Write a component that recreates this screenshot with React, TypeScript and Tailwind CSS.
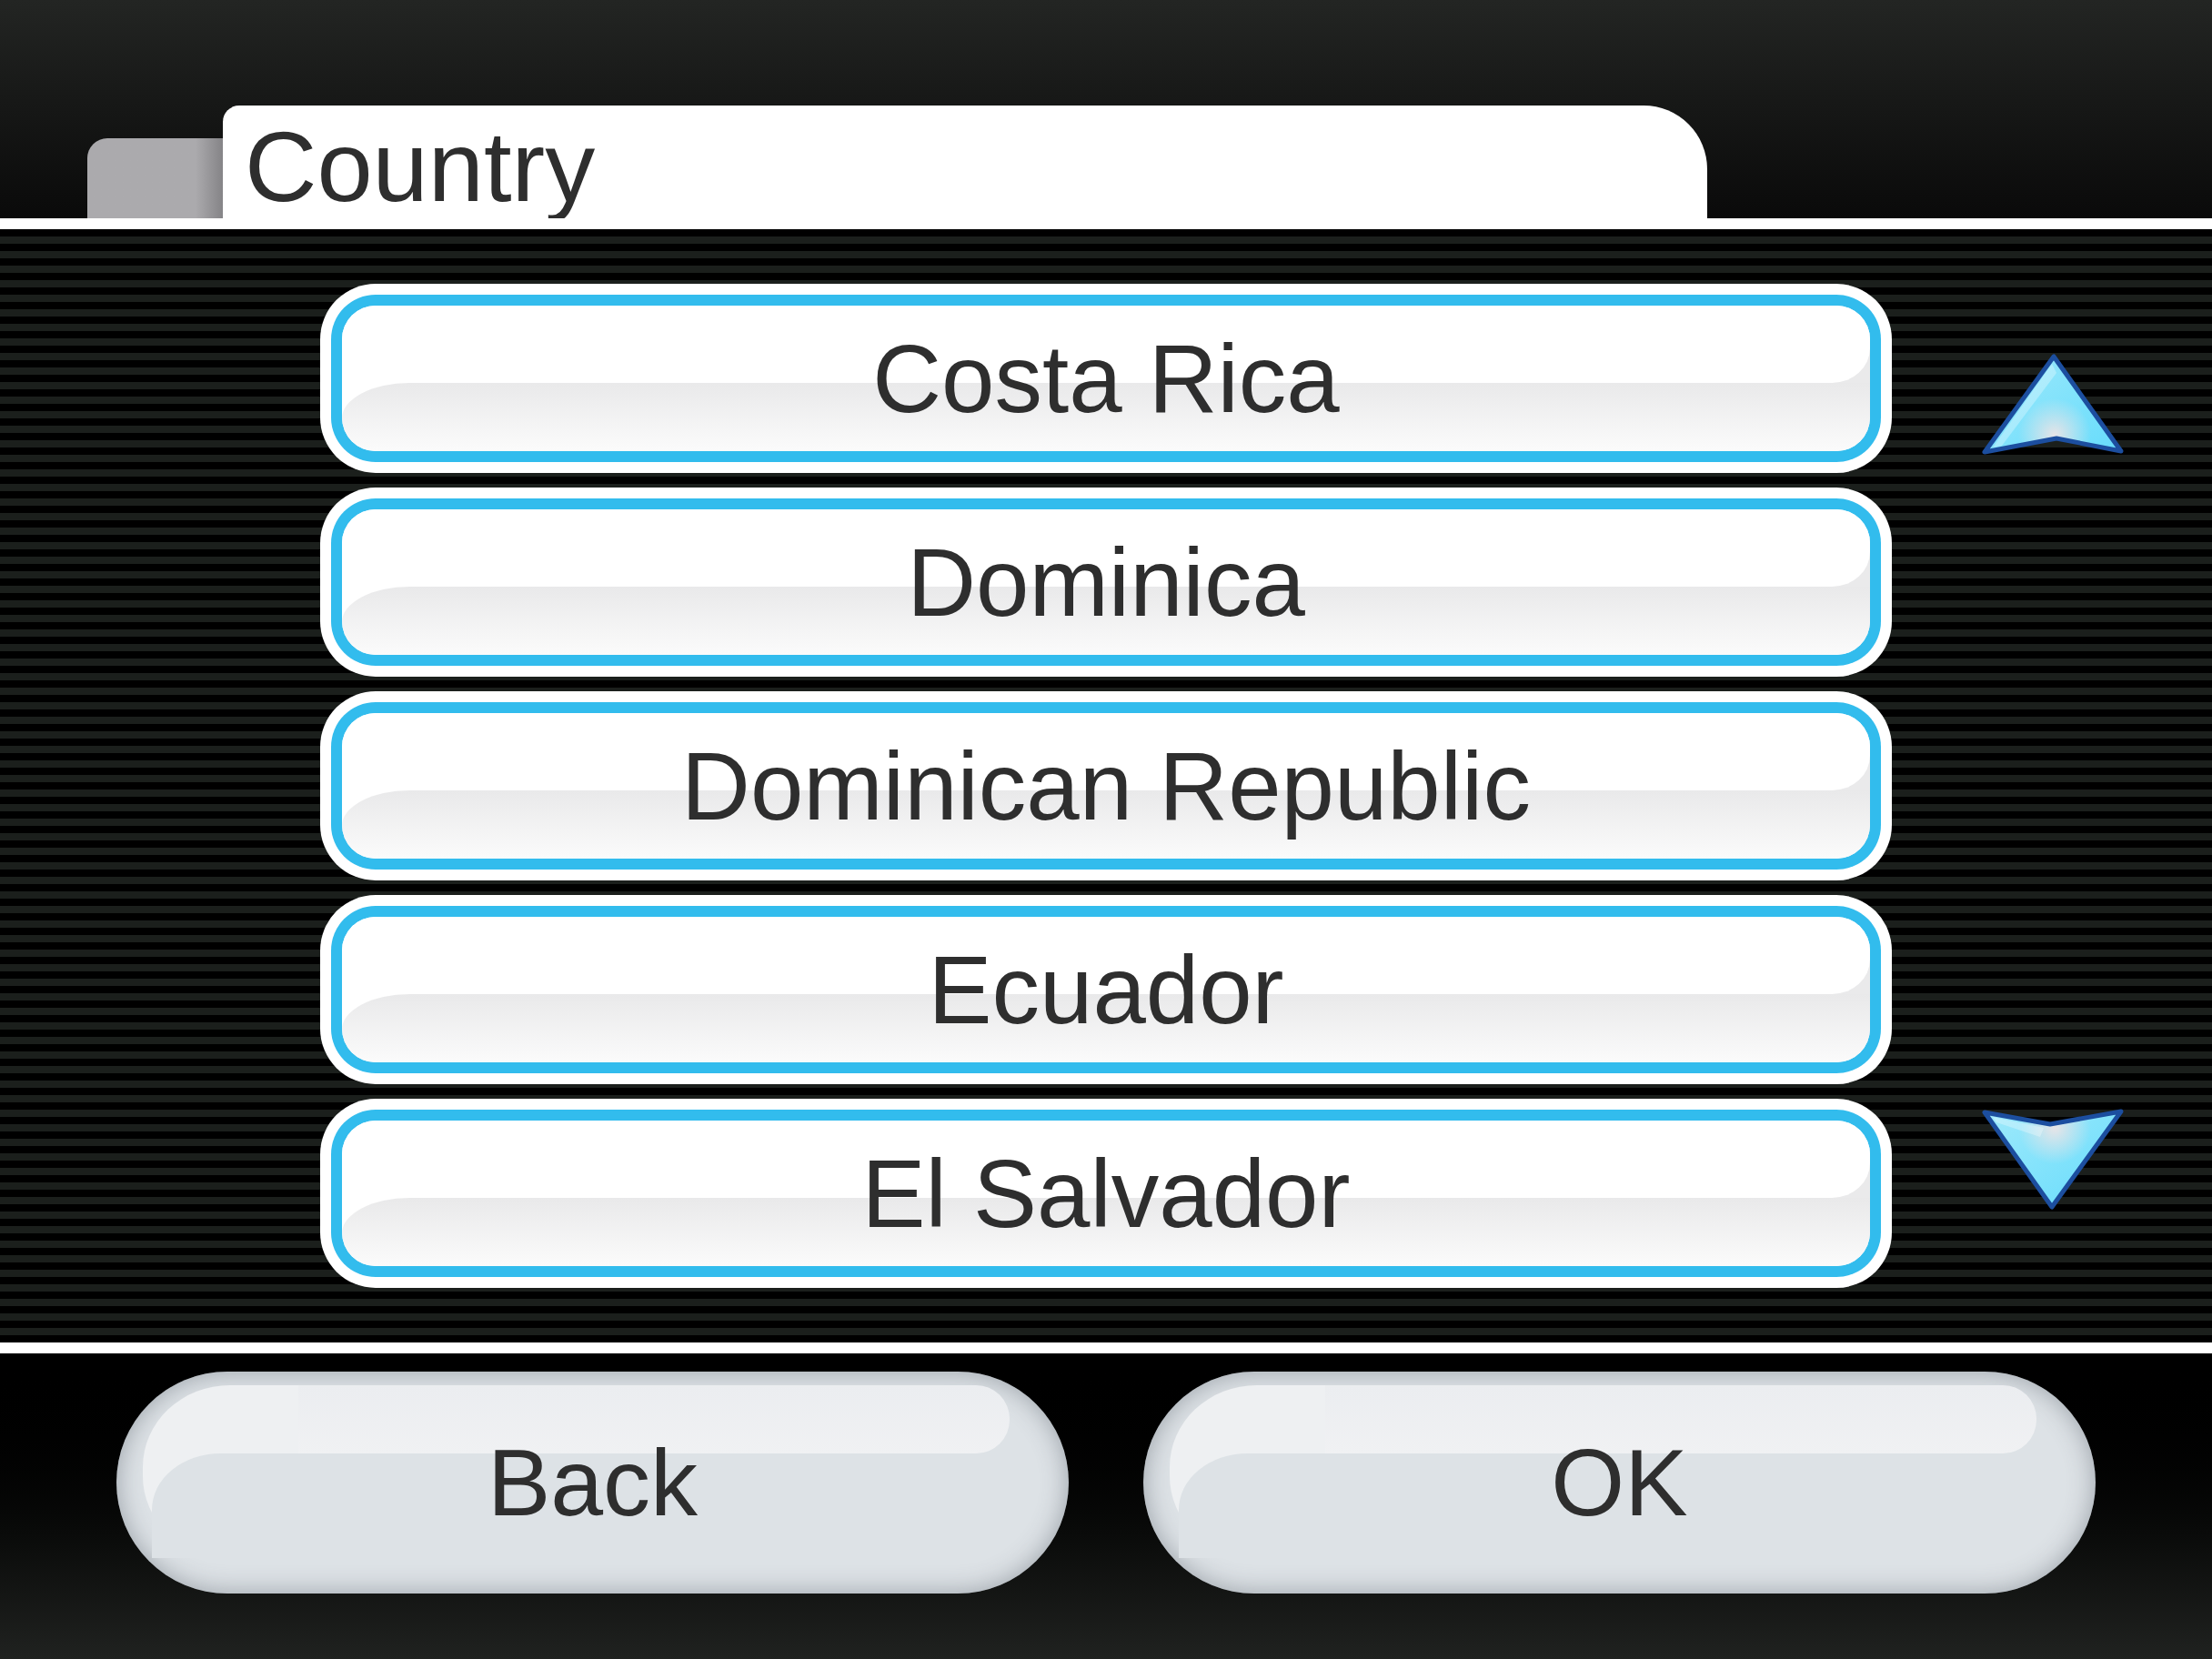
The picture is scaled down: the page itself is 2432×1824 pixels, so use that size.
import React from 'react'

const countries = ['Costa Rica', 'Dominica', 'Dominican Republic', 'Ecuador', 'El Salvador']

const font = "font-['Liberation_Sans',Arial,sans-serif]"

const ListItem: React.FC<{ label: string }> = ({ label }) => (
  <div className="h-[208px] w-[1728px] rounded-[61px] bg-white p-[12px]">
    <div className="h-full w-full rounded-[49px] bg-[#32bced] p-[12px]">
      <div className="relative flex h-full w-full items-center justify-center overflow-hidden rounded-[37px] bg-white">
        {/* gloss: grey lower half with curved edges */}
        <div className="absolute right-0 top-[47px] h-[60px] w-[80px] bg-[#eaeaeb]" />
        <div className="absolute left-0 right-0 top-0 h-[85px] rounded-br-[42px_38px] bg-white" />
        <div className="absolute bottom-0 left-0 right-0 top-[85px] rounded-tl-[74px_39px] bg-linear-to-b from-[#e9e9ea] to-[#fbfbfb]" />
        <span className={`relative ${font} text-[105px] leading-none text-[#2e2e2e]`}>{label}</span>
      </div>
    </div>
  </div>
)

const PillButton: React.FC<{ label: string }> = ({ label }) => (
  <div className="relative flex h-[244px] w-[1047px] items-center justify-center overflow-hidden rounded-full bg-[#dde2e6] shadow-[inset_0_0_28px_rgba(70,80,90,0.45)]">
    <div className="absolute left-[29px] top-[15px] h-[190px] w-[320px] rounded-l-[96px_90px] bg-[#eef0f2]" />
    <div className="absolute left-[200px] right-[65px] top-[15px] h-[75px] rounded-r-[37px] bg-linear-to-b from-[#ebedf0] to-[#f0f1f3]" />
    <div className="absolute left-[39px] top-[90px] h-[115px] w-[420px] rounded-tl-[75px_62px] bg-[#dde2e6]" />
    <span className={`relative ${font} text-[104px] leading-none text-[#2e2e2e]`}>{label}</span>
  </div>
)

const Arrow: React.FC<{ down?: boolean }> = ({ down }) => {
  const id = down ? 'dn' : 'up'
  const pts = down ? '5,7 77,20 155,6 79,111' : '81,6 5,111 84,96 155,110'
  const glowY = down ? 24 : 92
  const shine = down ? '14,12 70,24 66,34 18,18' : '79,14 14,106 24,104 84,24'
  return (
    <svg width="160" height="116" viewBox="0 0 160 116">
      <defs>
        <linearGradient id={`${id}-fill`} x1="0" y1="0" x2="1" y2="1">
          <stop offset="0" stopColor="#9fe9fb" />
          <stop offset="1" stopColor="#66dcfc" />
        </linearGradient>
        <radialGradient id={`${id}-glow`} cx="82" cy={glowY} r="40" gradientUnits="userSpaceOnUse">
          <stop offset="0" stopColor="#ece4e6" stopOpacity="0.95" />
          <stop offset="1" stopColor="#ece4e6" stopOpacity="0" />
        </radialGradient>
      </defs>
      <polygon points={pts} fill={`url(#${id}-fill)`} />
      <polygon points={pts} fill={`url(#${id}-glow)`} />
      <polygon points={shine} fill="#ffffff" opacity="0.3" />
      <polygon points={pts} fill="none" stroke="#1c4e9f" strokeWidth="5" strokeLinejoin="round" />
    </svg>
  )
}

export default function App() {
  return (
    <div className="flex h-[1824px] w-[2432px] flex-col overflow-hidden bg-black">
      {/* header with tabs */}
      <div className="flex h-[240px] items-end bg-linear-to-b from-[#232523] to-[#0a0a0a] pl-[96px]">
        <div className="h-[88px] w-[149px] rounded-tl-[22px] bg-linear-to-r from-[#abaaad] from-[80%] to-[#858487]" />
        <div className="h-[124px] w-[1632px] rounded-tl-[18px] rounded-tr-[70px] bg-white pl-[24px] pt-[12px]">
          <span className={`${font} text-[110px] leading-none text-[#2e2e2e]`}>Country</span>
        </div>
      </div>
      <div className="h-[12px] bg-white" />

      {/* striped list area */}
      <div className="flex h-[1224px] bg-[image:repeating-linear-gradient(to_bottom,#000_0px,#000_8px,#1b1f1c_8px,#1b1f1c_16px)] pl-[352px] pt-[60px]">
        <div className="flex flex-col gap-[16px]">
          {countries.map((c) => (
            <ListItem key={c} label={c} />
          ))}
        </div>
        <div className="ml-[97px] flex flex-col pt-[74px]">
          <Arrow />
          <div className="h-[714px]" />
          <Arrow down />
        </div>
      </div>
      <div className="h-[12px] bg-white" />

      {/* bottom buttons */}
      <div className="flex flex-1 gap-[82px] bg-linear-to-b from-[#000000] to-[#202220] px-[128px] pt-[20px]">
        <PillButton label="Back" />
        <PillButton label="OK" />
      </div>
    </div>
  )
}
